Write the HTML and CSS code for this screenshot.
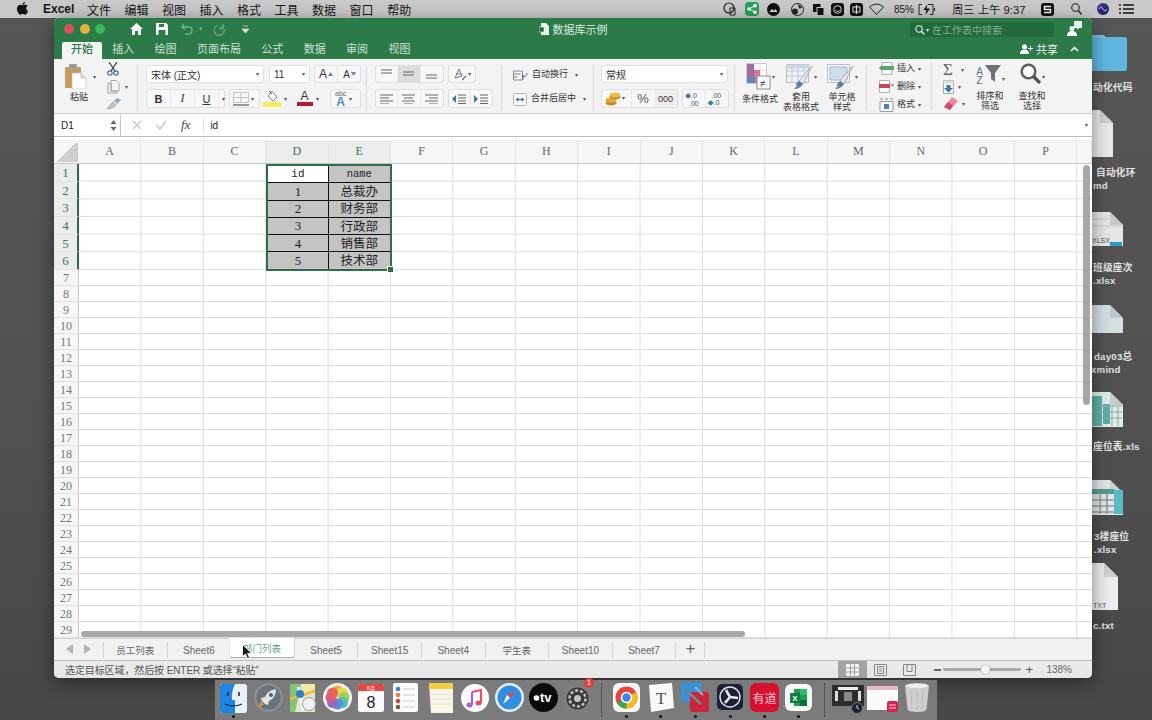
FILE: index.html
```html
<!DOCTYPE html>
<html lang="zh">
<head>
<meta charset="utf-8">
<title>数据库示例</title>
<link rel="stylesheet" href="styles.css">
</head>
<body>
<div class="menubar">
  <svg class="apple" width="11" height="13" viewBox="0 0 11 13"><path fill="#111" d="M8 0c.1 1-.8 2.600-2.500 2.700C5.400 1.400 6.500.2 8 0zM5.600 3.300c.7 0 1.500-.6 2.600-.6 1 0 1.900.5 2.400 1.300-2 1.200-1.700 4 .4 4.900-.5 1.400-1.700 3.800-3 3.800-.9 0-1.200-.6-2.300-.6s-1.500.6-2.300.6C1.800 12.700 0 9.600 0 7 0 4.300 1.700 2.800 3.300 2.800c1 0 1.700.5 2.300.5z"/></svg>
  <b class="menu-app">Excel</b>
  <span>文件</span><span>编辑</span><span>视图</span><span>插入</span><span>格式</span><span>工具</span><span>数据</span><span>窗口</span><span>帮助</span>
  <div class="status-icons">
    <svg width="13" height="14" viewBox="0 0 13 14"><circle cx="6" cy="6" r="5" fill="none" stroke="#222" stroke-width="1.200"/><path d="M7 6h5v7H7z" fill="none" stroke="#222"/></svg>
    <svg class="m9" width="14" height="14" viewBox="0 0 14 14"><rect width="14" height="14" rx="4" fill="#27a35c"/><circle cx="4" cy="7" r="1.800" fill="#fff"/><circle cx="10" cy="3.800" r="1.800" fill="#fff"/><circle cx="10" cy="10.200" r="1.800" fill="#fff"/><path d="M4 7l6-3.200M4 7l6 3.200" stroke="#fff"/></svg>
    <svg class="m8" width="13" height="13" viewBox="0 0 13 13"><circle cx="6.500" cy="6.500" r="6.500" fill="#111"/><path d="M2.500 9l2.500-3 2 2 1.500-2 2 3z" fill="#ddd"/></svg>
    <svg class="m11" width="13" height="13" viewBox="0 0 13 13"><circle cx="6.500" cy="6.500" r="6" fill="none" stroke="#222"/><circle cx="4" cy="8.500" r="3" fill="#222"/><path d="M6.500 1l5 3-3 2z" fill="#222"/></svg>
    <svg class="m9" width="11" height="13" viewBox="0 0 11 13"><rect y="1" width="7.500" height="8" fill="#111"/><rect x="4" y="4.500" width="7" height="8" fill="#111" stroke="#ccc"/></svg>
    <svg class="m7" width="13" height="13" viewBox="0 0 13 13"><rect width="13" height="13" rx="3" fill="#111"/><circle cx="6.500" cy="6.500" r="3.800" fill="none" stroke="#ddd"/><path d="M4.500 7.500q2 2 4 0" stroke="#ddd" fill="none"/></svg>
    <svg class="m6" width="13" height="13" viewBox="0 0 13 13"><rect width="13" height="13" rx="3" fill="#111"/><rect x="3" y="4" width="7" height="5" fill="none" stroke="#ddd"/><path d="M6.500 2v9" stroke="#ddd" stroke-width="1.300"/></svg>
    <svg class="m6" width="15" height="12" viewBox="0 0 15 12"><path d="M.5 4Q7.500-2 14.500 4L7.500 11.500z" fill="none" stroke="#222"/></svg>
    <span class="pct">85%</span>
    <svg class="m5" width="18" height="11" viewBox="0 0 18 11"><path d="M4 .5H1v10h3M10 .5h5v10h-3M16.500 4v3" fill="none" stroke="#222"/><path d="M9.500 0L5.500 6h3l-1 5 4.500-6.500H8.500z" fill="#111"/></svg>
    <span class="clock">周三 上午 9:37</span>
    <svg class="m16" width="13" height="13" viewBox="0 0 13 13"><rect width="13" height="13" rx="3" fill="#111"/><path d="M10 3.500H3.500v3H9.500v3H3" fill="none" stroke="#eee" stroke-width="1.500"/></svg>
    <svg class="m17" width="11" height="12" viewBox="0 0 11 12"><circle cx="4.500" cy="4.500" r="3.800" fill="none" stroke="#222" stroke-width="1.100"/><path d="M7.300 7.500L10.500 11.500" stroke="#222" stroke-width="1.300"/></svg>
    <svg class="m15" width="12" height="12" viewBox="0 0 12 12"><defs><linearGradient id="siri" x1="0" y1="0" x2="1" y2="1"><stop offset="0" stop-color="#3b3fa8"/><stop offset="1" stop-color="#1c1c40"/></linearGradient></defs><circle cx="6" cy="6" r="6" fill="url(#siri)"/><path d="M2 6q2-4 4 0t4 0" stroke="#d9a6e8" fill="none"/></svg>
    <svg class="m10" width="15" height="10" viewBox="0 0 15 10"><path d="M0 1h2M4 1h11M0 5h2M4 5h11M0 9h2M4 9h11" stroke="#111" stroke-width="1.300"/></svg>
  </div>
</div>

<div class="desk">
  <svg class="di di-folder" width="35" height="36" viewBox="0 0 35 36"><path d="M0 2h33q2 0 2 2v30q0 2-2 2H0z" fill="#5fb6de"/><path d="M0 0h12l2 3H0z" fill="#74c3e6"/></svg>
  <p class="dl l1">动化代码</p>
  <svg class="di di-f1" width="22" height="48" viewBox="0 0 22 48"><path d="M0 0h8l13 13v34H0z" fill="#e9e9e9"/><path d="M8 0l13 13H8z" fill="#cfcfcf"/></svg>
  <p class="dl l2">自动化环<br><span class="back">md</span></p>
  <svg class="di di-f2" width="32" height="36" viewBox="0 0 32 36"><path d="M0 0h18l13 13v21H0z" fill="#e6e6e6"/><path d="M18 0l13 13H18z" fill="#c9c9c9"/><path d="M18 30h12v4H18z" fill="#2f9ac4"/><path d="M0 7h18M0 14h30" stroke="#c8c8c8"/><text x="0" y="31" class="ficon-t">XLSX</text></svg>
  <p class="dl l3">班级座次<br>.xlsx</p>
  <svg class="di di-f3" width="32" height="30" viewBox="0 0 32 30"><path d="M0 0h18l13 13v15H0z" fill="#d4dfe2"/><path d="M18 0l13 13H18z" fill="#bcc9cd"/></svg>
  <p class="dl l4">day03总<br><span class="back">xmind</span></p>
  <svg class="di di-f4" width="32" height="36" viewBox="0 0 32 36"><path d="M0 0h18l13 13v22H0z" fill="#e3ecea"/><path d="M18 0l13 13H18z" fill="#c5d0ce"/><path d="M0 4h10v30H0zM11 12h7v20h-7z" fill="#2f9d8c" opacity=".75"/><path d="M0 14h30M0 20h30M0 26h30M20 14v20M26 14v20" stroke="#8fa5a2"/></svg>
  <p class="dl l5">座位表.xls</p>
  <svg class="di di-f5" width="32" height="36" viewBox="0 0 32 36"><path d="M0 0h18l13 13v22H0z" fill="#dfe6e6"/><path d="M18 0l13 13H18z" fill="#c8d2d2"/><path d="M22 10h9v24h-9z" fill="#55bcc8"/><path d="M0 9h22v5H0z" fill="#5a9a94"/><path d="M0 20h22M0 26h22M0 32h22M8 14v20M15 14v20" stroke="#777"/></svg>
  <p class="dl l6">3楼座位<br>.xlsx</p>
  <svg class="di di-f6" width="27" height="48" viewBox="0 0 27 48"><path d="M0 0h12l14 14v33H0z" fill="#ededed"/><path d="M12 0l14 14H12z" fill="#cfcfcf"/><text x="1" y="45" class="ficon-t">TXT</text></svg>
  <p class="dl l7">c.txt</p>
</div>

<main class="window">
  <header class="titlebar">
    <div class="title-row">
      <div class="quick">
        <i class="light red"></i><i class="light yellow"></i><i class="light green"></i>
        <svg class="q-home" width="13" height="12" viewBox="0 0 13 12"><path d="M6.500 0L0 6h2v6h3V8h3v4h3V6h2z" fill="#fff"/></svg>
        <svg class="q-gap" width="12" height="12" viewBox="0 0 12 12"><path d="M0 0h10l2 2v10H0z" fill="#fff"/><path d="M3 1h5v3H3zM2.500 7h7v5h-7z" fill="#2a7b48"/></svg>
        <svg class="q-gap" width="12" height="12" viewBox="0 0 12 12"><path d="M3 1L1 4h7q3 0 3 3.500T7 11H4M1 4l3 2.500" fill="none" stroke="#76ad8a" stroke-width="1.400"/></svg>
        <span class="q-dot">▾</span>
        <svg class="q-redo" width="13" height="13" viewBox="0 0 13 13"><path d="M3.500 2.500A5 5 0 1 0 10 6M9 1v4H5" fill="none" stroke="#76ad8a" stroke-width="1.300"/></svg>
        <svg class="q-cust" width="7" height="8" viewBox="0 0 7 8"><path d="M1 1h5M0 4h7l-3.500 4z" fill="#d5e5da" stroke="#d5e5da" stroke-width=".7"/></svg>
      </div>
      <div class="doc-title">
        <svg width="10" height="12" viewBox="0 0 10 12"><path d="M2 0h5l3 3v9H2z" fill="#e8f2ea"/><path d="M0 4h5v5H0z" fill="#1d6a3a" stroke="#e8f2ea" stroke-width=".6"/></svg>
        数据库示例
      </div>
      <div class="title-right">
        <div class="search">
          <svg width="10" height="10" viewBox="0 0 10 10"><circle cx="4" cy="4" r="3.200" fill="none" stroke="#e6f0e9" stroke-width="1.100"/><path d="M6.500 6.500L9.500 9.500" stroke="#e6f0e9" stroke-width="1.200"/></svg>
          <span class="search-caret">▾</span>
          <span class="search-text">在工作表中搜索</span>
        </div>
        <svg width="15" height="16" viewBox="0 0 15 16"><path d="M7 0h8v7h-3l-1 2-1-2H7z" fill="#e8f2ea"/><circle cx="5" cy="7.500" r="2.500" fill="#fff"/><path d="M0 15q0-5 5-5t5 5z" fill="#fff"/></svg>
      </div>
    </div>
    <nav class="tab-row">
      <span class="rtab active">开始</span><span class="rtab">插入</span><span class="rtab">绘图</span><span class="rtab">页面布局</span><span class="rtab">公式</span><span class="rtab">数据</span><span class="rtab">审阅</span><span class="rtab">视图</span>
      <div class="share">
        <svg width="13" height="10" viewBox="0 0 13 10"><circle cx="4.500" cy="2.800" r="2.500" fill="#fff"/><path d="M0 10q0-4.500 4.500-4.500T9 10z" fill="#fff"/><path d="M10.500 2v5M8 4.500h5" stroke="#fff"/></svg>
        <span>共享</span>
        <svg class="chev" width="9" height="6" viewBox="0 0 9 6"><path d="M1 5l3.500-3.500L8 5" fill="none" stroke="#fff" stroke-width="1.500"/></svg>
      </div>
    </nav>
  </header>

  <section class="ribbon">
    <div class="grp g-clip">
      <div class="paste">
        <svg width="22" height="25" viewBox="0 0 22 25"><rect y="3" width="16" height="21" rx="1.500" fill="#c99a5c"/><rect x="4" y="0" width="8" height="5" rx="1" fill="#9b9b9b"/><path d="M7 9h9l5 5v11H7z" fill="#fdfdfd" stroke="#bbb" stroke-width=".6"/><path d="M16 9v5h5" fill="#ddd" stroke="#bbb" stroke-width=".6"/></svg>
        <span class="caret paste-caret">▾</span>
        <span class="label paste-label">粘贴</span>
      </div>
      <div class="clip-tools">
        <svg width="12" height="14" viewBox="0 0 12 14"><path d="M2 0l6 9M10 0L4 9" stroke="#444" stroke-width="1.300"/><circle cx="3" cy="11" r="2.200" fill="none" stroke="#3f6fa8" stroke-width="1.200"/><circle cx="9" cy="11" r="2.200" fill="none" stroke="#3f6fa8" stroke-width="1.200"/></svg>
        <div class="copy-row"><svg width="13" height="14" viewBox="0 0 13 14"><path d="M1 3h3v8h6v2H1zM4 .5h5l3 3V11H4z" fill="#f5f5f5" stroke="#a3a3a3"/></svg><span class="caret">▾</span></div>
        <svg width="14" height="11" viewBox="0 0 14 11"><path d="M0 11l6-7 3 3q-3 4-9 4z" fill="#c6c6c6" stroke="#8a8a8a" stroke-width=".6"/><path d="M7 3l3-3 4 2-4 4z" fill="#8fa8c0"/></svg>
      </div>
    </div>

    <div class="grp g-font">
      <div class="row">
        <div class="field f-font"><span>宋体 (正文)</span><span class="caret">▾</span></div>
        <div class="field f-size"><span>11</span><span class="caret">▾</span></div>
        <div class="btns b-grow">
          <span class="b"><span class="big-a">A</span><svg width="5" height="4" viewBox="0 0 5 4"><path d="M0 4l2.500-4L5 4z" fill="#5d86b3"/></svg></span>
          <span class="b"><span class="small-a">A</span><svg width="5" height="4" viewBox="0 0 5 4"><path d="M0 0l2.500 4L5 0z" fill="#5d86b3"/></svg></span>
        </div>
      </div>
      <div class="row row-low">
        <div class="btns b-biu"><span class="b t-b">B</span><span class="b t-i">I</span><span class="b t-u">U</span><span class="b b-arrow"><span class="caret">▾</span></span></div>
        <div class="btns b-border"><span class="b"><svg width="16" height="14" viewBox="0 0 16 14"><path d="M.5.500h15v10H.5zM8 .5v10M.5 5.500h15" fill="none" stroke="#c4c4c4"/><path d="M0 13h16" stroke="#777" stroke-width="1.500"/></svg></span><span class="caret">▾</span></div>
        <div class="btns b-color">
          <span class="b"><svg width="18" height="17" viewBox="0 0 18 17"><path d="M0 12h18v5H0z" fill="#f4ee5b"/><path d="M9 1l5 6-4 4-5-5z" fill="#f8f8f8" stroke="#7b8794"/><path d="M6 1l3 3" stroke="#555"/></svg></span><span class="caret">▾</span>
          <span class="b t-color">A<i class="red-bar"></i></span><span class="caret">▾</span>
        </div>
        <div class="btns b-abc"><span class="abc"><small>abc</small><b>A</b></span><span class="caret">▾</span></div>
      </div>
    </div>

    <div class="grp g-align">
      <div class="row">
        <div class="btns b-3">
          <span class="b"><svg class="highline" width="11" height="6" viewBox="0 0 11 6"><path d="M0 1h11M0 4h11" stroke="#666"/></svg></span>
          <span class="b on"><svg width="11" height="6" viewBox="0 0 11 6"><path d="M0 1h11M0 4h11" stroke="#666"/></svg></span>
          <span class="b"><svg class="lowline" width="11" height="6" viewBox="0 0 11 6"><path d="M0 1h11M0 4h11" stroke="#666"/></svg></span>
        </div>
        <div class="btns b-orient"><svg width="14" height="13" viewBox="0 0 14 13"><path d="M2 10l4-9 3 7zM3 6h5" fill="none" stroke="#777"/><path d="M9 12l4-4" stroke="#4678a8" stroke-width="1.300"/></svg><span class="caret">▾</span></div>
      </div>
      <div class="row row-low">
        <div class="btns b-3">
          <span class="b"><svg width="13" height="10" viewBox="0 0 13 10"><path d="M0 1h13M0 4h9M0 7h13M0 10h9" stroke="#666"/></svg></span>
          <span class="b"><svg width="13" height="10" viewBox="0 0 13 10"><path d="M0 1h13M2 4h9M0 7h13M2 10h9" stroke="#666"/></svg></span>
          <span class="b"><svg width="13" height="10" viewBox="0 0 13 10"><path d="M0 1h13M4 4h9M0 7h13M4 10h9" stroke="#666"/></svg></span>
        </div>
        <div class="btns b-indent">
          <span class="b"><svg width="14" height="10" viewBox="0 0 14 10"><path d="M0 5l4-4v8z" fill="#3878b4"/><path d="M6 1h8M6 4h8M6 7h8M6 9.500h8" stroke="#666"/></svg></span>
          <span class="b"><svg width="14" height="10" viewBox="0 0 14 10"><path d="M4 5L0 1v8z" fill="#3878b4"/><path d="M6 1h8M6 4h8M6 7h8M6 9.500h8" stroke="#666"/></svg></span>
        </div>
      </div>
    </div>

    <div class="grp g-wrap">
      <div class="wrap-item"><svg width="15" height="11" viewBox="0 0 15 11"><path d="M.5 1h9v9h-9zM.5 4h7M.5 7h4" fill="none" stroke="#888"/><path d="M14 3q0 4-5 4l2-2m-2 2l2 2" fill="none" stroke="#3878b4"/></svg><span class="label">自动换行</span><span class="caret">▾</span></div>
      <div class="wrap-item"><svg width="14" height="13" viewBox="0 0 14 13"><rect x=".5" y=".5" width="13" height="12" rx="1" fill="#fafafa" stroke="#b5b5b5"/><path d="M3 6.500h8M3 6.500l2-1.500v3zM11 6.500L9 5v3z" stroke="#3878b4" fill="#3878b4"/></svg><span class="label">合并后居中</span><span class="caret">▾</span></div>
    </div>

    <div class="grp g-num">
      <div class="field f-num"><span>常规</span><span class="caret">▾</span></div>
      <div class="row row-low">
        <div class="btns b-fmt">
          <span class="b"><svg width="16" height="14" viewBox="0 0 16 14"><ellipse cx="6" cy="11" rx="5.500" ry="2.500" fill="#c98e1e"/><ellipse cx="6" cy="8" rx="5.500" ry="2.500" fill="#e3ab35"/><ellipse cx="10" cy="5" rx="5.500" ry="2.500" fill="#c98e1e"/><ellipse cx="10" cy="3" rx="5.500" ry="2.500" fill="#efbd45"/></svg></span>
          <span class="caret">▾</span><span class="b t-pct">%</span><span class="b t-000">000</span>
        </div>
        <div class="btns b-dec">
          <span class="b dec"><span class="blue">◆</span>.0<br><span class="ind">.00</span></span>
          <span class="b dec"><span class="ind">.00</span><br><span class="blue">◆</span>.0</span>
        </div>
      </div>
    </div>

    <div class="grp g-styles">
      <div class="style-btn s-cond">
        <div class="style-ico"><svg width="25" height="30" viewBox="0 0 25 30"><path d="M.5.500h20v20H.5z" fill="#fff" stroke="#ccc"/><path d="M7 .5v20M14 .5v20M.5 7h20M.5 14h20" stroke="#ddd"/><path d="M1 1h7v14H1z" fill="#9f6d9f"/><path d="M7 7h7v13H7z" fill="#c8587a" opacity=".8"/><path d="M1 14h8v6H1z" fill="#5e88b8"/><rect x="11" y="13" width="13" height="13" fill="#fafafa" stroke="#8e8e8e"/><text x="14" y="24" class="neq">≠</text></svg><span class="caret">▾</span></div>
        <span class="label">条件格式</span>
      </div>
      <div class="style-btn s-table">
        <div class="style-ico"><svg width="27" height="30" viewBox="0 0 27 30"><path d="M.5 1.500h22v18H.5z" fill="#edf1f6" stroke="#b8bdc4"/><path d="M.5 1.500h22v4H.5z" fill="#cfd8e4"/><path d="M6 1v19M12 1v19M18 1v19M1 8h22M1 13h22" stroke="#c5cad1"/><path d="M26 3L13 18l4 3z" fill="#e8e8e8" stroke="#888" stroke-width=".6"/><path d="M13 18l4 3q-3 5-9 5 3-2 2-5z" fill="#4f7db0"/><path d="M8 26q3-1 5-3l-1-1z" fill="#d7a12d"/></svg><span class="caret">▾</span></div>
        <span class="label">套用<br>表格格式</span>
      </div>
      <div class="style-btn s-cell">
        <div class="style-ico"><svg width="27" height="30" viewBox="0 0 27 30"><path d="M.5 1.500h22v18H.5z" fill="#f5f7fa" stroke="#b8bdc4"/><path d="M3 4h17v13H3z" fill="#cfdcea" stroke="#a8b4c0"/><path d="M26 3L13 18l4 3z" fill="#e8e8e8" stroke="#888" stroke-width=".6"/><path d="M13 18l4 3q-3 5-9 5 3-2 2-5z" fill="#4f7db0"/><path d="M8 26q3-1 5-3l-1-1z" fill="#d7a12d"/></svg><span class="caret">▾</span></div>
        <span class="label">单元格<br>样式</span>
      </div>
    </div>

    <div class="grp g-cells">
      <div class="cell-item"><svg width="15" height="13" viewBox="0 0 15 13"><path d="M3 .5h10v12H3z" fill="#fafafa" stroke="#aeb8b0"/><path d="M3 4h12v4H3z" fill="#56a66d"/><path d="M0 6l3-3v6z" fill="#56a66d"/></svg><span class="label">插入</span><span class="caret">▾</span></div>
      <div class="cell-item"><svg width="15" height="13" viewBox="0 0 15 13"><path d="M.5.500h10v12H.5z" fill="#fafafa" stroke="#b5b5b5"/><path d="M0 4h11v4H0z" fill="#c4455a"/><path d="M12 3.500l3 3m0-3l-3 3" stroke="#6d7680"/></svg><span class="label">删除</span><span class="caret">▾</span></div>
      <div class="cell-item"><svg width="15" height="14" viewBox="0 0 15 14"><path d="M1 3.500h13v10H1z" fill="#fafafa" stroke="#9c9c9c"/><path d="M5 6h5v5H5z" fill="#4b7fb5"/><path d="M1 1h3M6 1h3M11 1h3" stroke="#888"/></svg><span class="label">格式</span><span class="caret">▾</span></div>
    </div>

    <div class="grp g-edit">
      <div class="edit-col">
        <div class="edit-row"><span class="sigma">Σ</span><span class="caret">▾</span></div>
        <div class="edit-row"><svg width="11" height="14" viewBox="0 0 11 14"><path d="M.5.500h10v13H.5z" fill="#fafafa" stroke="#aaa"/><path d="M.5 .5h10v3H.5z" fill="#ddd"/><path d="M3.500 5h4v3H10l-4.500 4.500L1 8h2.500z" fill="#3878b4"/></svg><span class="caret">▾</span></div>
        <div class="edit-row"><svg width="15" height="13" viewBox="0 0 15 13"><path d="M9 0l6 4-8 9-6-3z" fill="#e9889a"/><path d="M1 10l4-5 5 3.500L7 13z" fill="#c8506a"/></svg><span class="caret">▾</span></div>
      </div>
      <div class="style-btn s-sort">
        <div class="style-ico"><span class="az"><b>A</b><b class="z">Z</b></span><svg width="16" height="18" viewBox="0 0 16 18"><path d="M0 0h16l-6 8v9l-4-3V8z" fill="#6c7379"/></svg><span class="caret">▾</span></div>
        <span class="label">排序和<br>筛选</span>
      </div>
      <div class="style-btn s-find">
        <div class="style-ico"><svg width="21" height="21" viewBox="0 0 21 21"><circle cx="8.500" cy="8.500" r="6.800" fill="#fff" stroke="#5c6268" stroke-width="2.600"/><path d="M13.500 13.500L20 20" stroke="#4a5056" stroke-width="3.200"/></svg><span class="caret">▾</span></div>
        <span class="label">查找和<br>选择</span>
      </div>
    </div>
  </section>

  <section class="formula">
    <div class="namebox"><span>D1</span><svg width="7" height="13" viewBox="0 0 7 13"><path d="M3.500 1L6.500 5h-6zM3.500 12L.5 8h6z" fill="#666"/></svg></div>
    <div class="fx-tools">
      <svg width="10" height="10" viewBox="0 0 10 10"><path d="M1 1l8 8M9 1L1 9" stroke="#c4c4c4" stroke-width="1.300"/></svg>
      <svg width="12" height="10" viewBox="0 0 12 10"><path d="M1 5l4 4 6-8" fill="none" stroke="#c4c4c4" stroke-width="1.300"/></svg>
      <i class="fx">fx</i>
    </div>
    <div class="fx-input">id</div>
    <span class="caret fx-caret">▾</span>
  </section>

  <section class="sheet">
    <div class="colhead">
      <div class="corner"></div>
      <span>A</span><span>B</span><span>C</span><span class="sel">D</span><span class="sel">E</span><span>F</span><span>G</span><span>H</span><span>I</span><span>J</span><span>K</span><span>L</span><span>M</span><span>N</span><span>O</span><span>P</span><span></span>
    </div>
    <div class="body">
      <div class="rowhead">
        <span class="tall sel">1</span><span class="tall sel">2</span><span class="tall sel">3</span><span class="tall sel">4</span><span class="tall sel">5</span><span class="tall sel">6</span>
        <span>7</span><span>8</span><span>9</span><span>10</span><span>11</span><span>12</span><span>13</span><span>14</span><span>15</span><span>16</span><span>17</span><span>18</span><span>19</span><span>20</span><span>21</span><span>22</span><span>23</span><span>24</span><span>25</span><span>26</span><span>27</span><span>28</span><span>29</span>
      </div>
      <div class="cells">
        <div class="cells-top">
          <div class="table">
            <span class="white">id</span><span>name</span>
            <span class="num">1</span><span class="cjk">总裁办</span>
            <span class="num">2</span><span class="cjk">财务部</span>
            <span class="num">3</span><span class="cjk">行政部</span>
            <span class="num">4</span><span class="cjk">销售部</span>
            <span class="num">5</span><span class="cjk">技术部</span>
            <i class="handle"></i>
          </div>
        </div>
        <div class="cells-rest"></div>
      </div>
    </div>
    <div class="hscroll"></div>
    <div class="vscroll"></div>
  </section>

  <section class="tabs">
    <div class="tab-nav">
      <svg width="7" height="10" viewBox="0 0 7 10"><path d="M7 0v10L0 5z" fill="#b2b2b2"/></svg>
      <svg width="7" height="10" viewBox="0 0 7 10"><path d="M0 0v10l7-5z" fill="#b2b2b2"/></svg>
    </div>
    <span class="stab cn">员工列表</span><span class="stab">Sheet6</span><span class="stab active cn">部门列表</span><span class="stab">Sheet5</span><span class="stab">Sheet15</span><span class="stab">Sheet4</span><span class="stab cn">学生表</span><span class="stab">Sheet10</span><span class="stab">Sheet7</span><span class="stab plus">+</span>
    <svg class="cursor" width="10" height="15" viewBox="0 0 10 15"><path d="M.5.500v12l3-2.500 2 4.500 2-1-2-4.200h4z" fill="#111" stroke="#fff" stroke-width=".8"/></svg>
  </section>

  <footer class="status">
    <span class="status-text">选定目标区域，然后按 ENTER 或选择“粘贴”</span>
    <div class="views">
      <span class="view on"><svg width="13" height="12" viewBox="0 0 13 12"><path d="M.5.500h12v11H.5z" fill="#f5f5f5" stroke="#f5f5f5" stroke-width=".8"/><path d="M4.500.5v11M8.500.5v11M.5 4h12M.5 8h12" stroke="#999"/></svg></span>
      <span class="view"><svg width="13" height="12" viewBox="0 0 13 12"><path d="M.5.500h12v11H.5z" fill="none" stroke="#888"/><path d="M3.500 2.500h6v7h-6zM5 5h3M5 7h3" fill="none" stroke="#888"/></svg></span>
      <span class="view"><svg width="13" height="12" viewBox="0 0 13 12"><path d="M.5.500h12v11H.5z" fill="none" stroke="#888"/><path d="M4 .5v7h5v-7" fill="none" stroke="#888"/></svg></span>
    </div>
    <div class="zoom">
      <i class="minus"></i>
      <div class="slider"><i class="knob"></i></div>
      <span class="zplus">+</span>
      <span class="zpct">138%</span>
    </div>
  </footer>
</main>

<div class="dock">
  <div class="app a-finder"><svg width="27" height="29" viewBox="0 0 27 29"><rect width="27" height="29" rx="3" fill="#e8f1f9"/><path d="M3 0h12q-4 8-3 16h3q0 7 0 13H3q-3 0-3-3V3q0-3 3-3z" fill="#1e86e0"/><path d="M8 8v4M19 8v4" stroke="#123" stroke-width="1.500"/><path d="M5 20q8 4 17 0" fill="none" stroke="#123" stroke-width="1.200"/></svg><i class="dot"></i></div>
  <div class="app a-rocket"><svg width="29" height="29" viewBox="0 0 29 29"><circle cx="14.500" cy="14.500" r="14.500" fill="#8a8f94"/><circle cx="14.500" cy="14.500" r="12" fill="#6c7278"/><path d="M22 6q-8 1-11 8l-4 1 1 3 3 3 3 1 1-4q7-3 7-12z" fill="#dfe3e6"/><path d="M7 18l-3 6 6-2z" fill="#e58d35"/><circle cx="17" cy="12" r="2" fill="#46607a"/></svg></div>
  <div class="app a-maps"><svg width="29" height="30" viewBox="0 0 29 30"><path d="M2 1h25v28H2z" fill="#dce9c8"/><path d="M2 1h11L7 29H2z" fill="#84c474"/><path d="M13 1h14v9H15z" fill="#f5e7a8"/><path d="M2 16L27 8" stroke="#f4b93a" stroke-width="2.500"/><path d="M10 4l5 24" stroke="#fff" stroke-width="2"/><circle cx="12" cy="11" r="4" fill="#2a7fd1"/><circle cx="21" cy="21" r="6.500" fill="#f2f2f2" stroke="#999"/></svg></div>
  <div class="app a-photos"><svg width="29" height="29" viewBox="0 0 29 29"><circle cx="14.500" cy="14.500" r="14.500" fill="#f4f4f4"/><g opacity=".85"><circle cx="14.500" cy="8" r="5.500" fill="#f2a01e"/><circle cx="19.500" cy="10" r="5.500" fill="#e7d52a"/><circle cx="21" cy="14.500" r="5.500" fill="#8dc63f"/><circle cx="19.500" cy="19.500" r="5.500" fill="#39b5a0"/><circle cx="14.500" cy="21" r="5.500" fill="#3f7fd4"/><circle cx="9.500" cy="19.500" r="5.500" fill="#7a56b5"/><circle cx="8" cy="14.500" r="5.500" fill="#c7408e"/><circle cx="9.500" cy="10" r="5.500" fill="#e84a44"/></g></svg></div>
  <div class="app a-cal"><svg width="26" height="30" viewBox="0 0 26 30"><rect y="1" width="26" height="28" rx="2" fill="#fafafa"/><path d="M0 8V3q0-2 2-2h22q2 0 2 2v5z" fill="#e8473f"/><text x="13" y="7" class="cal-m">6月</text><text x="13" y="25" class="cal-d">8</text></svg></div>
  <div class="app a-rem"><svg width="25" height="29" viewBox="0 0 25 29"><rect width="25" height="29" rx="2" fill="#fbfbfb"/><circle cx="5" cy="6" r="2.300" fill="#3f7fd4"/><circle cx="5" cy="12" r="2.300" fill="#e8873a"/><circle cx="5" cy="18" r="2.300" fill="#c8463f"/><circle cx="5" cy="24" r="2.300" fill="#7a5b3a"/><path d="M10 6h12M10 12h12M10 18h12M10 24h12" stroke="#ccc"/></svg></div>
  <div class="app a-notes"><svg width="25" height="30" viewBox="0 0 25 30"><path d="M1 0h24v30H3z" fill="#f7f5e8"/><path d="M1 0h24v6H1z" fill="#f3cf46"/><path d="M3 11h21M3 16h21M4 21h20" stroke="#e6e2cf"/></svg></div>
  <div class="app a-music"><svg width="28" height="28" viewBox="0 0 28 28"><circle cx="14" cy="14" r="14" fill="#fbfbfb"/><path d="M11 8l9-2v13" fill="none" stroke="#ee4a6a" stroke-width="2"/><path d="M11 8v13" stroke="#b05fd0" stroke-width="2"/><ellipse cx="8.500" cy="21" rx="3" ry="2.500" fill="#a060d8"/><ellipse cx="17.500" cy="19" rx="3" ry="2.500" fill="#ee4a6a"/></svg></div>
  <div class="app a-safari"><svg width="29" height="29" viewBox="0 0 29 29"><circle cx="14.500" cy="14.500" r="14.500" fill="#e4eef6"/><circle cx="14.500" cy="14.500" r="12" fill="#2e8fe0"/><path d="M21 8l-9 4 3 3z" fill="#e8473f"/><path d="M8 21l4-9 3 3z" fill="#fff"/></svg></div>
  <div class="app a-tv"><svg width="29" height="29" viewBox="0 0 29 29"><circle cx="14.500" cy="14.500" r="14.500" fill="#0b0b0b"/><text x="11" y="19" class="tv-t">tv</text><circle cx="7.500" cy="15" r="2.800" fill="#fff"/></svg></div>
  <div class="app a-prefs"><svg width="29" height="29" viewBox="0 0 29 29"><rect width="27" height="27" y="2" rx="5" fill="#7e7e7e"/><circle cx="13.500" cy="15.500" r="11" fill="#3a3a3a"/><circle cx="13.500" cy="15.500" r="8" fill="none" stroke="#c5c5c5" stroke-width="2.500" stroke-dasharray="3 2"/><circle cx="13.500" cy="15.500" r="3.500" fill="#c5c5c5"/></svg><span class="badge">1</span></div>
  <i class="dock-sep"></i>
  <div class="app a-chrome"><svg width="27" height="29" viewBox="0 0 27 29"><rect width="27" height="29" rx="6" fill="#f7f7f7"/><circle cx="13.500" cy="14.500" r="11" fill="#e8453c"/><path d="M13.500 14.500L4 20a11 11 0 0 0 9.500 5.500z" fill="#34a853"/><path d="M13.500 14.500v11A11 11 0 0 0 23 9z" fill="#f9bc15"/><circle cx="13.500" cy="14.500" r="5" fill="#3f83e8" stroke="#fff" stroke-width="1.600"/></svg><i class="dot"></i></div>
  <div class="app a-typora"><svg width="27" height="29" viewBox="0 0 27 29"><path d="M2 2l23-2 2 25-23 4z" fill="#f8f8f8"/><text x="14" y="21" class="typ-t">T</text></svg><i class="dot"></i></div>
  <div class="app a-para"><svg width="28" height="32" viewBox="0 0 28 32"><rect y="1" width="20" height="20" rx="2" fill="#3a92d6"/><rect x="9" y="11" width="19" height="20" rx="2" fill="#c9263b"/><path d="M5 9l15 14" stroke="#7a7f88" stroke-width="3"/><path d="M14 6l8 8" stroke="#7ebae6" stroke-width="2"/></svg><i class="dot"></i></div>
  <div class="app a-obs"><svg width="26" height="26" viewBox="0 0 26 26"><rect width="26" height="26" rx="5" fill="#1b2238"/><circle cx="13" cy="13" r="10" fill="none" stroke="#e5e5e5" stroke-width="1.400"/><path d="M13 13L9 6M13 13l8 1M13 13l-5 6" stroke="#e5e5e5" stroke-width="2.600"/></svg><i class="dot"></i></div>
  <div class="app a-youdao"><span class="yd">有道</span><i class="dot"></i></div>
  <div class="app a-excel"><svg width="27" height="27" viewBox="0 0 27 27"><rect width="27" height="27" rx="6" fill="#f7f7f7"/><path d="M9 5h13v17H9z" fill="#1f9d57"/><path d="M15 5h7v6h-7z" fill="#2bbd6e"/><path d="M15 16h7v6h-7z" fill="#0e6e3a"/><rect x="5" y="9" width="10" height="10" rx="1" fill="#107c41"/><text x="10" y="17" class="xl-t">X</text></svg><i class="dot"></i></div>
  <i class="dock-sep sep2"></i>
  <div class="app a-shot"><svg width="32" height="31" viewBox="0 0 32 31"><rect y="2" width="32" height="21" fill="#2d2d2d"/><rect x="6" y="4" width="20" height="3" fill="#eee"/><rect x="3" y="8" width="3" height="10" fill="#ddd"/><rect x="26" y="8" width="3" height="10" fill="#ddd"/><rect x="12" y="9" width="8" height="9" fill="#8a8a8a"/><circle cx="25" cy="25" r="5.500" fill="#1e2230" stroke="#777"/><path d="M25 22v3l2 1" stroke="#ddd" fill="none"/></svg></div>
  <div class="app a-pdf"><svg width="31" height="30" viewBox="0 0 31 30"><path d="M0 3h31v24H0z" fill="#fafafa"/><path d="M0 3h31v4H0z" fill="#e8b8c2"/><rect x="20" y="18" width="11" height="11" rx="2" fill="#d3244c"/><path d="M22 22h7M22 25h7" stroke="#f5c8d2"/></svg></div>
  <div class="app a-trash"><svg width="24" height="29" viewBox="0 0 24 29"><ellipse cx="12" cy="3" rx="12" ry="2.800" fill="#eee"/><path d="M0 3l2.500 23q.3 3 9.500 3t9.500-3L24 3q-12 5-24 0z" fill="#cfcfcf"/><path d="M6 8l1 18M12 8v19M18 8l-1 18" stroke="#bcbcbc"/></svg></div>
</div>
</body>
</html>
```
FILE: styles.css
```css
* { box-sizing: border-box; }
html, body { margin: 0; height: 720px; overflow: hidden; }
body {
  position: relative;
  width: 1152px;
  background: linear-gradient(180deg, #575757 0%, #505050 60%, #474747 100%);
  font-family: "Liberation Sans", "Noto Sans CJK SC", sans-serif;
  color: #333;
}
svg { display: block; flex: none; }
i { font-style: normal; }

/* Menu bar */
.menubar {
  height: 18px;
  background: #c9c9c9;
  display: flex;
  align-items: center;
  padding-left: 17px;
  font-size: 12px;
  color: #161616;
}
.menubar > span { margin-right: 13.500px; }
.apple { margin-right: 15px; margin-top: -2px; }
.menu-app { font-size: 12px; margin-right: 14px; width: 30px; }
.status-icons { margin-left: auto; padding-right: 18px; display: flex; align-items: center; }
.m5 { margin-left: 5px; } .m6 { margin-left: 6px; } .m7 { margin-left: 7px; } .m8 { margin-left: 8px; }
.m9 { margin-left: 9px; } .m10 { margin-left: 10px; } .m11 { margin-left: 11px; } .m15 { margin-left: 15px; }
.m16 { margin-left: 16px; } .m17 { margin-left: 17px; }
.pct { margin-left: 10px; font-size: 10px; width: 19px; white-space: nowrap; }
.clock { margin-left: 16px; font-size: 11.300px; width: 73px; white-space: nowrap; }

/* Desktop items */
.desk { position: absolute; left: 1092px; top: 0; width: 60px; height: 720px; }
.di { position: absolute; left: 0; }
.di-folder { top: 35px; }
.di-f1 { top: 110px; }
.di-f2 { top: 212px; }
.di-f3 { top: 305px; }
.di-f4 { top: 392px; }
.di-f5 { top: 480px; }
.di-f6 { top: 563px; }
.ficon-t { font: 7px "Liberation Sans", sans-serif; fill: #555; }
.dl {
  position: absolute;
  left: 1px;
  margin: 0;
  font-size: 9.700px;
  line-height: 13px;
  font-weight: 700;
  letter-spacing: .2px;
  color: #e4e4e4;
  white-space: nowrap;
}
.l1 { top: 81px; }
.l2 { top: 166px; left: 4px; }
.l3 { top: 261px; }
.l4 { top: 350px; left: 2px; }
.l5 { top: 440px; }
.l6 { top: 530px; left: 2px; }
.l7 { top: 619px; }
.back { margin-left: -3px; }

/* Window */
.window {
  position: absolute;
  left: 54px;
  top: 18px;
  width: 1038px;
  height: 660px;
  border-radius: 5px;
  overflow: hidden;
  background: #fff;
  display: flex;
  flex-direction: column;
  box-shadow: 0 4px 18px rgba(0, 0, 0, .45);
}

/* Title bar */
.titlebar { height: 41px; background: #2b7a48; color: #fff; flex: none; }
.title-row { height: 22px; display: grid; grid-template-columns: 1fr auto 1fr; align-items: center; }
.quick { display: flex; align-items: center; padding-left: 10px; }
.light { width: 10px; height: 10px; border-radius: 50%; margin-right: 5.500px; }
.light.red { background: #d8505a; }
.light.yellow { background: #e0b03c; }
.light.green { background: #39b660; margin-right: 0; }
.q-home { margin-left: 25px; }
.q-gap { margin-left: 13px; }
.q-dot { font-size: 7px; color: #76ad8a; margin-left: 3px; width: 10px; text-align: center; }
.q-redo { margin-left: 8px; }
.q-cust { margin-left: 15px; }
.doc-title { display: flex; align-items: center; gap: 4px; font-size: 11px; color: #dfeee4; }
.title-right { display: flex; justify-content: flex-end; align-items: center; gap: 13px; padding-right: 10px; }
.search {
  width: 144px;
  height: 15px;
  margin-top: 1px;
  background: #216a3c;
  border-radius: 2px;
  display: flex;
  align-items: center;
  padding-left: 5px;
}
.search-caret { font-size: 6px; margin-left: 1px; color: #dbe8df; }
.search-text { font-size: 10px; margin-left: 3px; color: #7fb293; }
.tab-row { height: 19px; display: flex; align-items: flex-end; padding-left: 8px; }
.rtab {
  height: 17px;
  padding: 0 10.200px;
  font-size: 11px;
  line-height: 14px;
  color: #cfe3d6;
  white-space: nowrap;
}
.rtab.active { width: 40px; padding: 0 9px; background: #f3f3f3; color: #2b7a48; font-weight: 500; border-radius: 2px 2px 0 0; }
.share { margin-left: auto; display: flex; align-items: center; gap: 3px; height: 17px; padding: 0 13px 3px 0; font-size: 11px; color: #f2f8f4; }
.chev { margin-left: 9px; }

/* Ribbon */
.ribbon {
  height: 55px;
  flex: none;
  display: flex;
  background: #f3f3f3;
  border-bottom: 1px solid #cfcfcf;
  padding-top: 6px;
  font-size: 10px;
  color: #333;
}
.grp { height: 46px; border-right: 1px solid #dcdcdc; flex: none; display: flex; flex-direction: column; }
.caret { font-size: 6px; color: #555; line-height: 1; flex: none; }
.label { font-size: 9px; line-height: 9.500px; color: #333; white-space: nowrap; }
.row { display: flex; gap: 4px; height: 18px; }
.row-low { height: 19px; margin-top: 6px; }
.btns, .field {
  display: flex;
  align-items: center;
  background: #f7f7f7;
  border: 1px solid #e0e0e0;
  border-radius: 3px;
  height: 100%;
}
.b { display: flex; align-items: center; justify-content: center; height: 100%; flex: none; }

.g-clip { width: 84px; flex-direction: row; position: relative; }
.paste { width: 53px; padding: 0 0 0 11px; display: flex; flex-wrap: wrap; align-content: flex-start; margin-top: -1px; }
.paste-caret { margin: 10px 0 0 6px; }
.paste-label { width: 100%; padding-left: 5px; margin-top: 4px; }
.clip-tools { display: flex; flex-direction: column; gap: 4px; margin-top: -3px; }
.copy-row { display: flex; align-items: center; gap: 5px; }

.g-font { width: 229px; padding-left: 8px; }
.field { background: #fff; justify-content: space-between; padding: 0 4px; }
.f-font { width: 118px; }
.f-size { width: 41px; margin-left: 1px; }
.b-grow { width: 47px; }
.b-grow .b { width: 23px; border-right: 1px solid #e8e8e8; gap: 1px; }
.b-grow .b:last-child { border-right: 0; }
.big-a { font-size: 12px; color: #333; }
.small-a { font-size: 10px; color: #333; }
.b-biu { width: 79px; }
.b-biu .b { width: 24px; border-right: 1px solid #ececec; }
.b-biu .b-arrow { width: 9px; border: 0; }
.t-b { font-weight: 700; font-size: 11px; }
.t-i { font-style: italic; font-family: "Liberation Serif", serif; font-size: 12px; }
.t-u { text-decoration: underline; font-size: 11px; }
.b-border { width: 31px; gap: 2px; padding-left: 3px; }
.b-color { width: 63px; border: 0; background: none; padding-left: 0; gap: 3px; margin-left: -1px; }
.t-color { position: relative; flex-direction: column; width: 17px; margin-left: 6px; font-size: 12px; line-height: 12px; justify-content: flex-start; padding-top: 1px; }
.red-bar { display: block; width: 16px; height: 4px; background: #b8182e; }
.b-abc { width: 31px; gap: 3px; padding-left: 4px; }
.abc { display: flex; flex-direction: column; align-items: center; line-height: 8px; }
.abc small { font-size: 7px; color: #666; }
.abc b { font-size: 12px; line-height: 9px; color: #4a8cc7; }

.g-align { width: 135px; padding-left: 8px; }
.b-3 { width: 69px; overflow: hidden; }
.b-3 .b { width: 22.330px; border-right: 1px solid #ececec; }
.b-3 .b:last-child { border-right: 0; }
.b.on { background: #dcdcdc; }
.lowline { margin-top: 6px; }
.highline { margin-top: -4px; }
.b-orient { width: 28px; gap: 1px; padding-left: 4px; }
.b-indent { width: 45px; }
.b-indent .b { width: 21.500px; }
.b-indent .b:first-child { border-right: 1px solid #e8e8e8; }

.g-wrap { width: 92px; padding-left: 11px; gap: 10px; padding-top: 3px; }
.wrap-item { display: flex; align-items: center; height: 14px; gap: 4px; }
.wrap-item .caret { margin-left: 3px; }

.g-num { width: 141px; padding-left: 7px; }
.f-num { width: 127px; height: 18px; flex: none; }
.b-fmt { width: 77px; }
.b-fmt .b:first-child { width: 20px; padding-left: 2px; }
.b-fmt .caret { width: 10px; border-right: 1px solid #e8e8e8; line-height: 17px; height: 100%; }
.t-pct { width: 22px; font-size: 13px; color: #555; }
.t-000 { flex: 1; font-size: 9px; background: #eee; }
.b-dec { width: 47px; }
.b-dec .dec { width: 22.500px; font-size: 7px; line-height: 7px; display: block; padding: 2px 0 0 2px; color: #555; }
.b-dec .dec:first-child { border-right: 1px solid #e8e8e8; }
.blue { color: #3878b4; font-size: 6px; }
.ind { padding-left: 4px; }

.g-styles { width: 132px; flex-direction: row; }
.style-btn { display: flex; flex-direction: column; align-items: center; text-align: center; }
.style-ico { height: 32px; display: flex; align-items: flex-start; gap: 1px; margin-top: -2px; }
.style-ico .caret { margin-top: 11px; }
.style-btn .label { margin-top: 0; }
.s-cond { width: 34px; margin-left: 8px; }
.s-table { width: 34px; margin-left: 7px; }
.s-cell { width: 34px; margin-left: 7px; }

.g-cells { width: 65px; padding-left: 12px; gap: 5px; margin-top: -3px; height: 49px; }
.cell-item { display: flex; align-items: center; height: 14px; }
.cell-item .label { margin-left: 3px; width: 20px; }
.cell-item .caret { margin-left: 1px; }

.g-edit { width: 159px; flex-direction: row; border-right: 0; }
.edit-col { display: flex; flex-direction: column; gap: 2px; width: 29px; margin: -3px 0 0 11px; flex: none; }
.edit-row { display: flex; align-items: center; gap: 4px; height: 16px; }
.sigma { font-family: "Liberation Serif", serif; font-size: 17px; line-height: 14px; color: #666; width: 14px; }
.s-sort { width: 36px; margin-top: 2px; }
.az { display: flex; flex-direction: column; font-size: 10px; line-height: 9px; color: #4678a8; margin-top: 2px; width: 9px; }
.az b { font-weight: 400; }
.az .z { color: #666; }
.s-sort .style-ico { height: 30px; }
.s-find { width: 34px; margin-left: 7px; }

/* Formula bar */
.formula {
  height: 23px;
  flex: none;
  display: flex;
  align-items: center;
  background: #fff;
  border-bottom: 1px solid #bcbcbc;
  font-size: 10px;
  color: #222;
}
.namebox {
  width: 67px;
  height: 100%;
  display: flex;
  align-items: center;
  justify-content: space-between;
  padding: 0 3px 0 7px;
  border-right: 1px solid #c9c9c9;
  font-size: 10px;
}
.fx-tools { display: flex; align-items: center; gap: 13px; padding-left: 11px; height: 100%; }
.fx { font-family: "Liberation Serif", serif; font-style: italic; font-size: 13px; color: #444; margin-left: 1px; }
.fx-input { margin-left: 13px; padding-left: 6px; height: 15px; line-height: 15px; border-left: 1px solid #e0e0e0; flex: 1; }
.fx-caret { margin-right: 4px; }

/* Sheet */
.sheet {
  position: relative;
  margin-top: 4px;
  height: 497px;
  flex: none;
  background: #fff;
  font-family: "Liberation Serif", "Noto Sans CJK SC", serif;
  box-shadow: 0 -1px 0 #ededed;
}
.colhead {
  height: 23px;
  display: grid;
  grid-template-columns: 25px repeat(16, 62.400px) 1fr;
  background: #f6f6f6;
  border-bottom: 1px solid #c7c7c7;
  font-size: 12px;
  color: #666;
}
.colhead span { text-align: center; line-height: 21px; border-right: 1px solid #e4e4e4; }
.colhead .sel { background: #ececec; color: #2f7a4c; }
.corner { background: linear-gradient(135deg, #f6f6f6 50%, #cfcfcf 50%); margin: 2px 1px 1px 2px; border-right: 1px solid #c7c7c7; }
.body { display: flex; }
.rowhead { width: 25px; flex: none; display: flex; flex-direction: column; background: #f6f6f6; }
.rowhead span {
  height: 16px;
  flex: none;
  font-size: 12px;
  line-height: 16px;
  text-align: center;
  color: #6f7a72;
  border-bottom: 1px solid #e2e2e2;
  border-right: 1px solid #c7c7c7;
}
.rowhead .tall { height: 17.670px; line-height: 17px; font-size: 13px; }
.rowhead .sel { background: #ececec; color: #3f7757; border-right: 2px solid #2d6e46; }
.cells { flex: 1; }
.cells-top, .cells-rest {
  background-image:
    linear-gradient(90deg, transparent calc(100% - 1px), #dedede 0),
    linear-gradient(180deg, transparent calc(100% - 1px), #dedede 0);
}
.cells-top { height: 106px; background-size: 62.400px 100%, 100% 17.670px; }
.cells-rest { height: 368px; background-size: 62.400px 100%, 100% 16px; }
.table {
  position: relative;
  margin-left: 187.200px;
  width: 125.800px;
  height: 106.500px;
  border: 2px solid #2d6e46;
  display: grid;
  grid-template-columns: 59.500px minmax(0, 1fr);
  grid-template-rows: repeat(6, minmax(0, 1fr));
  background: #111;
  gap: 1px;
}
.table span {
  background: #c4c4c4;
  display: flex;
  align-items: center;
  justify-content: center;
  min-height: 0;
  line-height: 1;
  font-family: "Liberation Mono", monospace;
  font-size: 10.500px;
  color: #222;
}
.table .white { background: #fff; font-size: 11px; }
.table .num { font-family: "Liberation Serif", serif; font-size: 13px; }
.table .cjk { font-family: "Noto Sans CJK SC", sans-serif; font-size: 12.500px; }
.handle { position: absolute; right: -4px; bottom: -4px; width: 5px; height: 5px; background: #2d6e46; border: 1px solid #fff; box-sizing: content-box; }
.hscroll { position: absolute; left: 27px; top: 490px; width: 664px; height: 6px; border-radius: 3px; background: #a8a8a8; }
.vscroll { position: absolute; left: 1029px; top: 24px; width: 7px; height: 240px; border-radius: 3.500px; background: #a8a8a8; }

/* Sheet tabs */
.tabs {
  position: relative;
  height: 22px;
  flex: none;
  display: flex;
  align-items: flex-start;
  background: #f1f1f1;
  border-top: 1px solid #d4d4d4;
  font-size: 10px;
  color: #666;
}
.tab-nav { width: 49px; height: 16px; display: flex; align-items: center; justify-content: flex-end; gap: 11px; padding-right: 12px; margin-top: 2px; }
.stab {
  width: 63.600px;
  height: 16px;
  margin-top: 3px;
  text-align: center;
  line-height: 18px;
  border-left: 1px solid #d4d4d4;
  white-space: nowrap;
  flex: none;
}
.stab.cn { font-size: 9.500px; }
.stab.active {
  height: 19px;
  margin-top: -1px;
  padding-top: 2px;
  background: #fff;
  color: #6aa884;
  border-left: 0;
  border-radius: 0 0 2px 2px;
  box-shadow: 0 1px 1px rgba(0, 0, 0, .3);
}
.stab.plus { width: 30px; font-size: 17px; line-height: 13px; border-right: 1px solid #d4d4d4; }
.cursor { position: absolute; left: 188px; top: 5px; }

/* Status bar */
.status {
  height: 18px;
  flex: none;
  display: flex;
  align-items: center;
  background: linear-gradient(180deg, #ececec, #e6e6e6);
  border-top: 1px solid #bdbdbd;
  font-size: 10px;
  letter-spacing: -.1px;
  color: #555;
  padding-left: 11px;
}
.status-text { width: 773px; white-space: nowrap; }
.views { display: flex; height: 100%; }
.view { width: 28.500px; height: 100%; display: flex; align-items: center; justify-content: center; }
.view.on { background: #a3a3a3; }
.zoom { display: flex; align-items: center; margin-left: 10px; }
.minus { width: 7px; height: 2px; background: #666; }
.slider { position: relative; width: 78px; height: 3px; border-radius: 2px; background: #a9a9a9; margin-left: 2px; }
.knob { position: absolute; left: 38px; top: -3.500px; width: 9px; height: 9px; border-radius: 50%; background: #f5f5f5; box-shadow: 0 0 1px #666; }
.zplus { font-size: 13px; line-height: 14px; color: #555; margin-left: 5px; width: 9px; }
.zpct { font-size: 10px; margin-left: 12px; color: #666; }

/* Dock */
.dock {
  position: absolute;
  left: 215px;
  top: 680px;
  width: 722px;
  height: 40px;
  background: #7b7b7b;
  display: flex;
  padding-left: 5px;
}
.app { position: relative; height: 40px; flex: none; padding-top: 3px; }
.dot { position: absolute; left: 50%; bottom: 2px; width: 3px; height: 3px; margin-left: -1.500px; border-radius: 50%; background: #111; }
.a-finder { width: 34px; padding-top: 4px; }
.a-rocket { width: 34px; }
.a-maps { width: 35px; }
.a-photos { width: 35px; }
.a-cal { width: 35px; }
.a-rem { width: 35px; }
.a-notes { width: 33px; }
.a-music { width: 34px; padding-top: 4px; }
.a-safari { width: 34px; }
.a-tv { width: 35px; }
.a-prefs { width: 33px; }
.a-chrome { width: 34px; }
.a-typora { width: 34px; }
.a-para { width: 36px; padding-top: 1px; }
.a-obs { width: 33px; padding-top: 4px; }
.a-youdao { width: 35px; padding-top: 3px; }
.a-excel { width: 27px; padding-top: 4px; }
.a-chrome .dot { left: 13.500px; }
.a-typora .dot { left: 13.500px; }
.a-para .dot { left: 14px; }
.a-obs .dot { left: 13px; }
.a-youdao .dot { left: 14.500px; }
.a-excel .dot { left: 13.500px; }
.a-finder .dot { left: 13.500px; }
.a-shot { width: 35px; margin-left: 7px; }
.a-pdf { width: 38px; }
.a-trash { width: 24px; }
.dock-sep { width: 1px; height: 34px; margin: 3px 11px 0 4px; background: #555; flex: none; }
.sep2 { margin: 3px 0 0 12px; }
.yd {
  display: flex;
  align-items: center;
  justify-content: center;
  width: 29px;
  height: 29px;
  border-radius: 6px;
  background: #d8102f;
  color: #f7c9d2;
  font-family: "Noto Sans CJK SC", sans-serif;
  font-size: 12px;
  white-space: nowrap;
}
.badge {
  position: absolute;
  left: 20px;
  top: -2px;
  width: 10px;
  height: 10px;
  border-radius: 50%;
  background: #d8443c;
  color: #fff;
  font-size: 7px;
  line-height: 10px;
  text-align: center;
}
.cal-m { font: 5px "Noto Sans CJK SC", sans-serif; fill: #fff; text-anchor: middle; }
.cal-d { font: 16px "Liberation Sans", sans-serif; fill: #222; text-anchor: middle; }
.tv-t { font: 700 13px "Liberation Sans", sans-serif; fill: #fff; text-anchor: start; }
.typ-t { font: 17px "Liberation Serif", serif; fill: #555; text-anchor: middle; }
.xl-t { font: 700 8px "Liberation Sans", sans-serif; fill: #fff; text-anchor: middle; }
.neq { font: 10px "Liberation Sans", sans-serif; fill: #333; }
```
